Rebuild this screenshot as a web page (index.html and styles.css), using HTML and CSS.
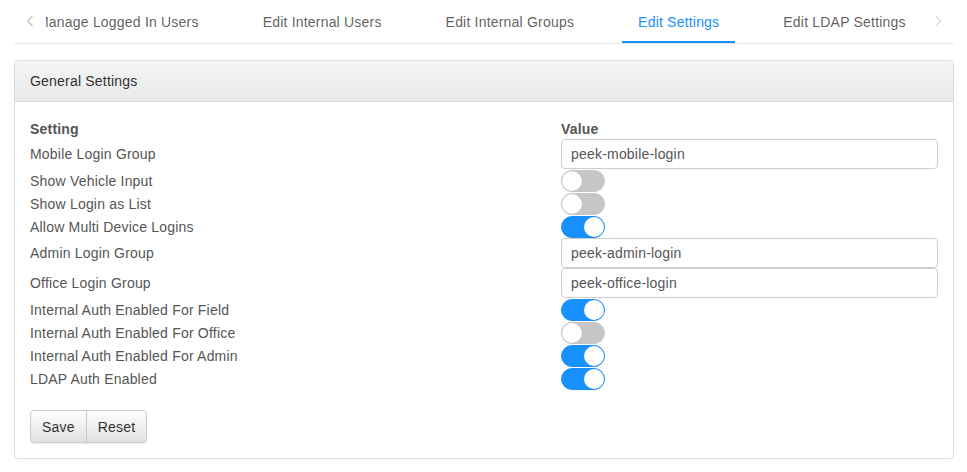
FILE: index.html
```html
<!DOCTYPE html>
<html>
<head>
<meta charset="utf-8">
<link rel="stylesheet" href="styles.css">
</head>
<body>
<div class="tabs">
  <div class="tab-arrow">
    <svg width="8" height="12" viewBox="0 0 8 12"><polyline points="6.5,1 1.5,6 6.5,11" fill="none" stroke="#bfbfbf" stroke-width="1.1"/></svg>
  </div>
  <div class="tab-scroll">
    <div class="tab-list">
      <div class="tab">Manage Logged In Users</div>
      <div class="tab">Edit Internal Users</div>
      <div class="tab">Edit Internal Groups</div>
      <div class="tab active">Edit Settings</div>
      <div class="tab">Edit LDAP Settings</div>
    </div>
  </div>
  <div class="tab-arrow">
    <svg width="8" height="12" viewBox="0 0 8 12"><polyline points="1.5,1 6.5,6 1.5,11" fill="none" stroke="#d9d9d9" stroke-width="1.1"/></svg>
  </div>
</div>

<div class="panel">
  <div class="panel-heading">General Settings</div>
  <div class="panel-body">
    <div class="settings">
      <div class="th">Setting</div><div class="th">Value</div>

      <div class="row-in label">Mobile Login Group</div>
      <div class="row-in"><div class="input">peek-mobile-login</div></div>

      <div class="row-sw label">Show Vehicle Input</div>
      <div class="row-sw"><span class="switch"></span></div>

      <div class="row-sw label">Show Login as List</div>
      <div class="row-sw"><span class="switch"></span></div>

      <div class="row-sw label">Allow Multi Device Logins</div>
      <div class="row-sw"><span class="switch on"></span></div>

      <div class="row-in label">Admin Login Group</div>
      <div class="row-in"><div class="input">peek-admin-login</div></div>

      <div class="row-in label">Office Login Group</div>
      <div class="row-in"><div class="input">peek-office-login</div></div>

      <div class="row-sw label">Internal Auth Enabled For Field</div>
      <div class="row-sw"><span class="switch on"></span></div>

      <div class="row-sw label">Internal Auth Enabled For Office</div>
      <div class="row-sw"><span class="switch"></span></div>

      <div class="row-sw label">Internal Auth Enabled For Admin</div>
      <div class="row-sw"><span class="switch on"></span></div>

      <div class="row-sw label">LDAP Auth Enabled</div>
      <div class="row-sw"><span class="switch on"></span></div>
    </div>
    <div class="btn-group">
      <button class="btn">Save</button><button class="btn">Reset</button>
    </div>
  </div>
</div>
</body>
</html>
```

FILE: styles.css
```css
* { box-sizing: border-box; }
html, body { background: #fff; }
body {
  margin: 0;
  padding: 0 13px 0 14px;
  font-family: "Liberation Sans", Arial, sans-serif;
  font-size: 14px;
  letter-spacing: 0.2px;
  color: #555;
}

.tabs {
  display: flex;
  height: 44px;
  border-bottom: 1px solid #e8e8e8;
}
.tab-arrow {
  width: 32px;
  flex: none;
  display: flex;
  align-items: center;
  justify-content: center;
  padding-bottom: 1px;
}
.tab-scroll {
  flex: 1;
  overflow: hidden;
}
.tab-list {
  display: flex;
  margin-left: -25px;
  white-space: nowrap;
}
.tab {
  padding: 12px 16px 0;
  height: 43px;
  line-height: 21px;
  margin-right: 32px;
  color: rgba(0, 0, 0, 0.65);
  border-bottom: 2px solid transparent;
}
.tab.active {
  color: #1890ff;
  border-bottom-color: #1890ff;
}

.panel {
  margin-top: 16px;
  border: 1px solid #ddd;
  border-radius: 4px;
  box-shadow: 0 1px 1px rgba(0, 0, 0, 0.05);
}
.panel-heading {
  height: 41px;
  padding: 10px 15px;
  line-height: 20px;
  color: #333;
  background: linear-gradient(#f5f5f5, #e8e8e8);
  border-bottom: 1px solid #ddd;
  border-radius: 3px 3px 0 0;
}
.panel-body {
  padding: 17px 15px 15px;
}

.settings {
  display: grid;
  grid-template-columns: 531px 1fr;
}
.settings > div {
  display: flex;
  align-items: center;
}
.th {
  height: 20px;
  font-weight: bold;
}
.row-in { height: 30px; }
.row-in .input {
  width: 100%;
  height: 30px;
  border: 1px solid #ccc;
  border-radius: 4px;
  padding: 0 9px;
  line-height: 28px;
  color: #555;
}
.row-sw { height: 23px; }

.switch {
  position: relative;
  display: block;
  width: 44px;
  height: 22px;
  border-radius: 11px;
  background: #c6c6c6;
  border: 1px solid #c6c6c6;
}
.switch::after {
  content: "";
  position: absolute;
  top: 0;
  left: 0;
  width: 20px;
  height: 20px;
  border-radius: 50%;
  background: #fff;
  box-shadow: 0 0 0 0.5px #bbb;
}
.switch.on {
  background: #1890ff;
  border-color: #1890ff;
}
.switch.on::after {
  left: auto;
  right: 0;
  box-shadow: none;
}

.btn-group {
  display: flex;
  margin-top: 20px;
}
.btn {
  font-family: inherit;
  font-size: 14px;
  letter-spacing: 0.2px;
  color: #333;
  height: 33px;
  padding: 0 11px;
  border: 1px solid #ccc;
  background: linear-gradient(#fff, #e0e0e0);
  box-shadow: inset 0 1px 0 rgba(255, 255, 255, 0.15), 0 1px 1px rgba(0, 0, 0, 0.075);
  cursor: pointer;
}
.btn:first-child { border-radius: 4px 0 0 4px; }
.btn:last-child { border-radius: 0 4px 4px 0; margin-left: -1px; }
```
